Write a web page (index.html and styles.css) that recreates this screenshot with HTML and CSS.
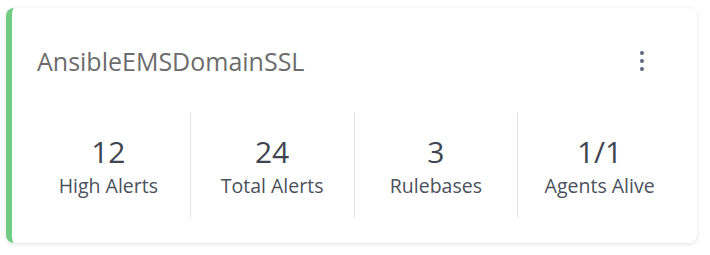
FILE: index.html
```html
<!DOCTYPE html>
<html>
<head lang="en">
    <meta charset="UTF-8">
    <title>AnsibleEMSDomainSSL</title>
    <link rel="stylesheet" href="styles.css">
</head>
<body>
<div class="card">
    <div class="card-head">
        <span class="card-title">AnsibleEMSDomainSSL</span>
        <span class="kebab"><i></i><i></i><i></i></span>
    </div>
    <ul class="stats">
        <li><b>12</b><span>High Alerts</span></li>
        <li><b>24</b><span>Total Alerts</span></li>
        <li><b>3</b><span>Rulebases</span></li>
        <li><b>1/1</b><span>Agents Alive</span></li>
    </ul>
</div>
</body>
</html>
```

FILE: styles.css
```css
* {
    margin: 0;
    padding: 0;
    box-sizing: border-box;
}

ul, li {
    list-style: none;
}

body {
    background: #ffffff;
    font-family: "Open Sans", "Liberation Sans", sans-serif;
    padding: 8px 13px 12px 6px;
}

.card {
    height: 235px;
    background: #ffffff;
    border-left: 6px solid #6fcc82;
    border-radius: 8px;
    box-shadow: 0 1px 4px rgba(0, 0, 0, 0.12);
}

.card-head {
    display: flex;
    align-items: center;
    justify-content: space-between;
    height: 104px;
    padding: 2px 53px 0 25px;
}

.card-title {
    font-size: 25px;
    color: #6c6c6c;
}

.kebab {
    display: flex;
    flex-direction: column;
    gap: 4px;
}

.kebab i {
    width: 4px;
    height: 4px;
    border-radius: 50%;
    background: #5d6a80;
}

.stats {
    display: flex;
    margin: 0 16px 0 15px;
}

.stats li {
    flex: 1;
    height: 106px;
    padding-top: 4px;
    display: flex;
    flex-direction: column;
    align-items: center;
    justify-content: center;
    border-left: 1px solid #e4e8ee;
}

.stats li:first-child {
    border-left: none;
}

.stats b {
    font-weight: normal;
    font-size: 30px;
    line-height: 34px;
    color: #3f4550;
}

.stats span {
    margin-top: 4px;
    font-size: 19.5px;
    line-height: 26px;
    color: #4a515c;
}
```
